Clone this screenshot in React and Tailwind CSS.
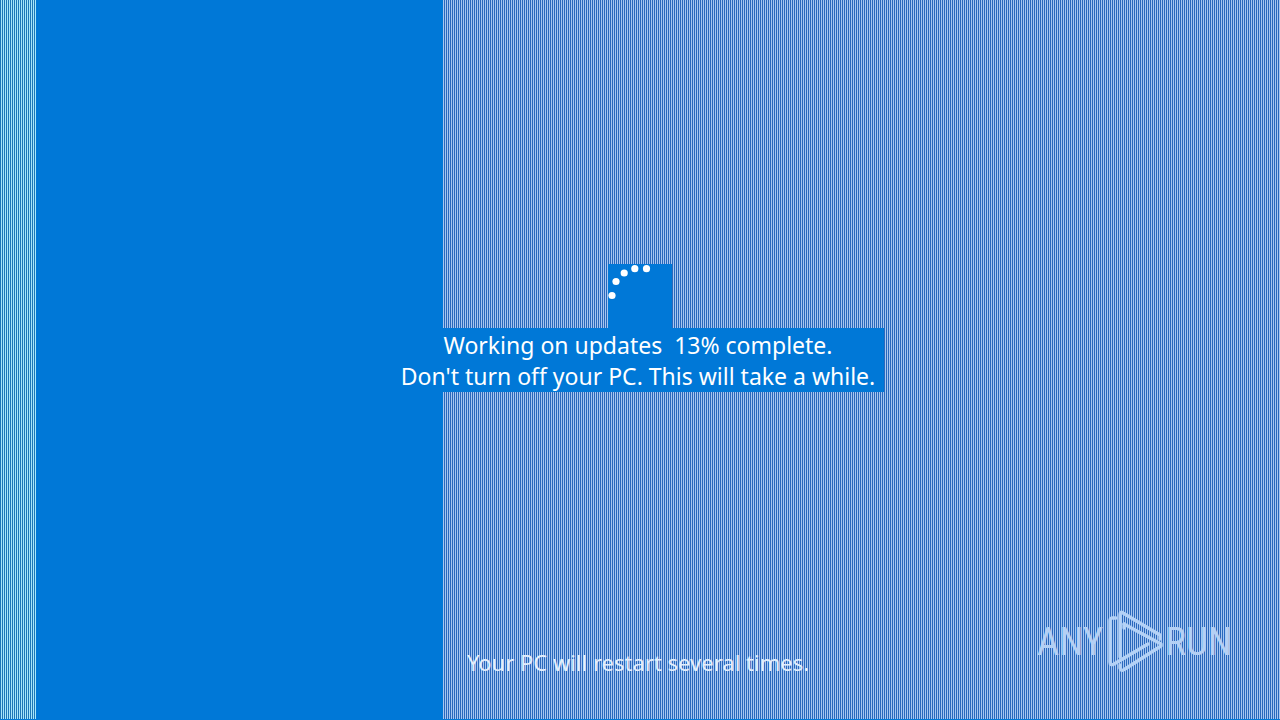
function Dots() {
  return (
    <svg viewBox="0 0 64 64" className="size-16" fill="#fff" role="img" aria-label="Loading">
      <circle cx="4" cy="31.5" r="3.6" />
      <circle cx="8" cy="17.5" r="3.6" />
      <circle cx="16.2" cy="9" r="3.6" />
      <circle cx="26.8" cy="4.7" r="3.6" />
      <circle cx="38.5" cy="4.7" r="3.6" />
    </svg>
  );
}

function Watermark() {
  return (
    <div className="absolute right-12 bottom-[46px] flex items-center font-['Roboto_Condensed','Open_Sans_Condensed','Roboto',sans-serif] text-[39px] leading-[62px] font-normal text-[#b4d0f4]">
      <span>ANY</span>
      <svg viewBox="0 0 58 64" className="ml-1 h-16 w-[58px]" fill="none" stroke="#b4d2f6" strokeWidth="3.4" strokeLinejoin="round" strokeLinecap="round">
        <path d="M9 8 L5 8 Q3 8 3 11 V52 Q3 56 7 54 L41 34" />
        <path d="M13 47 V5 Q13 1 16 3 L53 25 V29" />
        <path d="M17 14 L54 34 V36 L18 59 Q14 62 13 58 V55" />
        <path d="M17 14 V18" />
      </svg>
      <span>RUN</span>
    </div>
  );
}

export default function App() {
  return (
    <main className="relative isolate flex min-h-screen flex-col items-center justify-between overflow-hidden bg-[#0078d7] font-['Noto_Sans',sans-serif] text-[23px] text-white">
      <div aria-hidden="true" className="absolute inset-x-0 top-0 bottom-px -z-10 flex">
        <div className="w-9 bg-[repeating-linear-gradient(to_right,#1e77b8_0_1px,#a8e6fa_1px_2px)]" />
        <div className="w-[407px]" />
        <div className="flex-1 bg-[repeating-linear-gradient(to_right,#a6c6f0_0_1px,#2968bc_1px_2px)]" />
      </div>
      <section className="flex flex-col items-center pt-[264px]">
        <div className="bg-[#0078d7]">
          <Dots />
        </div>
        <div className="w-[488px] bg-[#0078d7] pt-0.5 pr-1 text-center leading-[31px] whitespace-pre">
          <p>{"Working on updates  13% complete."}</p>
          <p>Don't turn off your PC. This will take a while.</p>
        </div>
      </section>
      <p className="pr-1 pb-[42px] text-[22px] leading-8 text-[#e4effc]">Your PC will restart several times.</p>
      <Watermark />
    </main>
  );
}
